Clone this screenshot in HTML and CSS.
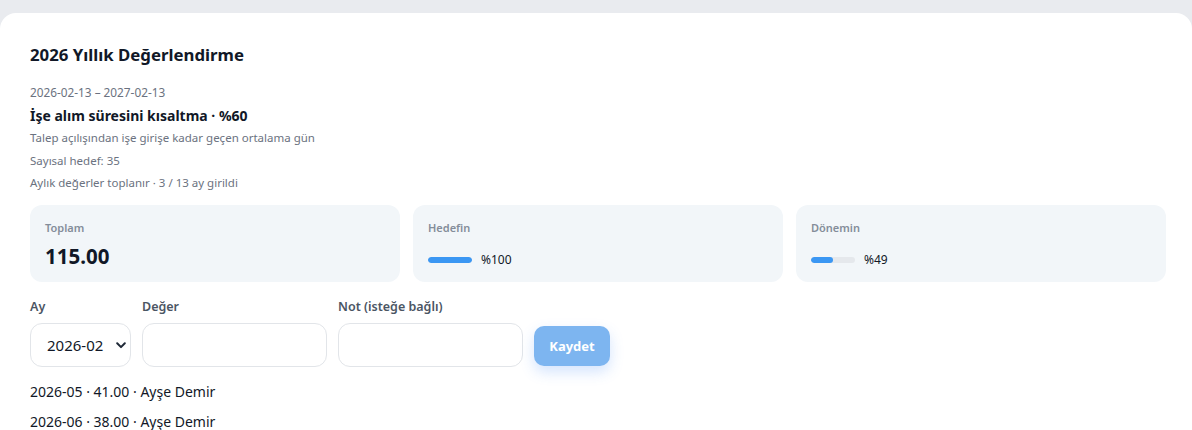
FILE: index.html
```html
<!DOCTYPE html>
<html lang="tr">
<head>
<meta charset="utf-8">
<title>2026 Yıllık Değerlendirme</title>
<link rel="stylesheet" href="styles.css">
</head>
<body>
<div class="card">
  <h2 class="title">2026 Yıllık Değerlendirme</h2>
  <div class="period">2026-02-13 – 2027-02-13</div>
  <div class="goal">İşe alım süresini kısaltma · %60</div>
  <div class="meta">Talep açılışından işe girişe kadar geçen ortalama gün</div>
  <div class="meta">Sayısal hedef: 35</div>
  <div class="meta">Aylık değerler toplanır · 3 / 13 ay girildi</div>

  <div class="stats">
    <div class="stat">
      <div class="stat-label">Toplam</div>
      <div class="stat-value">115.00</div>
    </div>
    <div class="stat">
      <div class="stat-label">Hedefin</div>
      <div class="progress">
        <div class="track"><div class="fill" style="width:100%"></div></div>
        <span class="pct">%100</span>
      </div>
    </div>
    <div class="stat">
      <div class="stat-label">Dönemin</div>
      <div class="progress">
        <div class="track"><div class="fill" style="width:49%"></div></div>
        <span class="pct">%49</span>
      </div>
    </div>
  </div>

  <form class="entry">
    <label class="field field-month">
      <span class="field-label">Ay</span>
      <span class="select-wrap">
        <select class="control select">
          <option>2026-02</option>
        </select>
        <svg class="chev" width="10" height="7" viewBox="0 0 10 7"><path d="M1.2 1.3 5 5.1 8.8 1.3" fill="none" stroke="#1f2937" stroke-width="2" stroke-linecap="round" stroke-linejoin="round"/></svg>
      </span>
    </label>
    <label class="field field-input">
      <span class="field-label">Değer</span>
      <input class="control" type="text">
    </label>
    <label class="field field-input">
      <span class="field-label">Not (isteğe bağlı)</span>
      <input class="control" type="text">
    </label>
    <button class="save" type="button" disabled>Kaydet</button>
  </form>

  <ul class="entries">
    <li>2026-05 · 41.00 · Ayşe Demir</li>
    <li>2026-06 · 38.00 · Ayşe Demir</li>
  </ul>
</div>
</body>
</html>
```
FILE: styles.css
```css
* { box-sizing: border-box; }
html, body { margin: 0; padding: 0; }
body {
  background: #e9ebef;
  font-family: "Noto Sans", "Open Sans", sans-serif;
  color: #111827;
  height: 430px;
  overflow: hidden;
}
.card {
  margin-top: 13px;
  background: #ffffff;
  border-radius: 16px 16px 0 0;
  padding: 30px 26px 0 30px;
  min-height: 417px;
}
.title {
  margin: 0;
  font-size: 16.8px;
  line-height: 24px;
  font-weight: 700;
  color: #111827;
}
.period {
  margin-top: 17px;
  font-size: 11.8px;
  line-height: 16px;
  color: #6b7280;
}
.goal {
  margin-top: 6px;
  font-size: 14px;
  line-height: 20px;
  font-weight: 700;
  color: #111827;
}
.meta {
  font-size: 11.5px;
  line-height: 22.5px;
  color: #6b7280;
}
.goal + .meta { margin-top: 1px; }
.stats {
  margin-top: 10px;
  display: grid;
  grid-template-columns: repeat(3, 1fr);
  gap: 13px;
}
.stat {
  background: #f2f6f9;
  border-radius: 12px;
  height: 77px;
  padding: 15px 15px 0 15px;
}
.stat-label {
  font-size: 11px;
  line-height: 16px;
  font-weight: 600;
  color: #848d9a;
}
.stat-value {
  margin-top: 6px;
  font-size: 20.5px;
  line-height: 28px;
  font-weight: 700;
  color: #111827;
}
.progress {
  margin-top: 10px;
  display: flex;
  align-items: center;
  gap: 9px;
  height: 28px;
}
.track {
  width: 44px;
  height: 6px;
  border-radius: 3px;
  background: #e5e8ec;
  overflow: hidden;
}
.fill {
  height: 100%;
  background: #3b97f3;
  border-radius: 3px;
}
.pct {
  font-size: 12px;
  color: #111827;
}
.entry {
  margin-top: 16px;
  display: flex;
  align-items: flex-end;
  gap: 11px;
}
.field {
  display: flex;
  flex-direction: column;
  gap: 7px;
}
.field-label {
  font-size: 12.5px;
  line-height: 18px;
  font-weight: 600;
  color: #4b5563;
}
.field-month { width: 101px; }
.field-input { width: 185px; }
.control {
  display: block;
  width: 100%;
  height: 44px;
  border: 1px solid #e2e5e9;
  border-radius: 12px;
  background: #ffffff;
  font-family: inherit;
  font-size: 15px;
  color: #111827;
  padding: 0 14px;
  outline: none;
}
.select-wrap { position: relative; display: block; }
.select {
  appearance: none;
  -webkit-appearance: none;
  padding-left: 16px;
}
.chev {
  position: absolute;
  right: 5px;
  top: 19px;
  pointer-events: none;
}
.save {
  margin-bottom: 1px;
  width: 76px;
  height: 40px;
  border: none;
  border-radius: 10px;
  background: #7db5f0;
  color: #ffffff;
  font-family: inherit;
  font-size: 13px;
  font-weight: 700;
  box-shadow: 0 6px 14px rgba(59, 130, 246, 0.22);
}
.entries {
  list-style: none;
  margin: 10px 0 0 0;
  padding: 0;
}
.entries li {
  font-size: 14px;
  line-height: 30px;
  color: #111827;
}
```
